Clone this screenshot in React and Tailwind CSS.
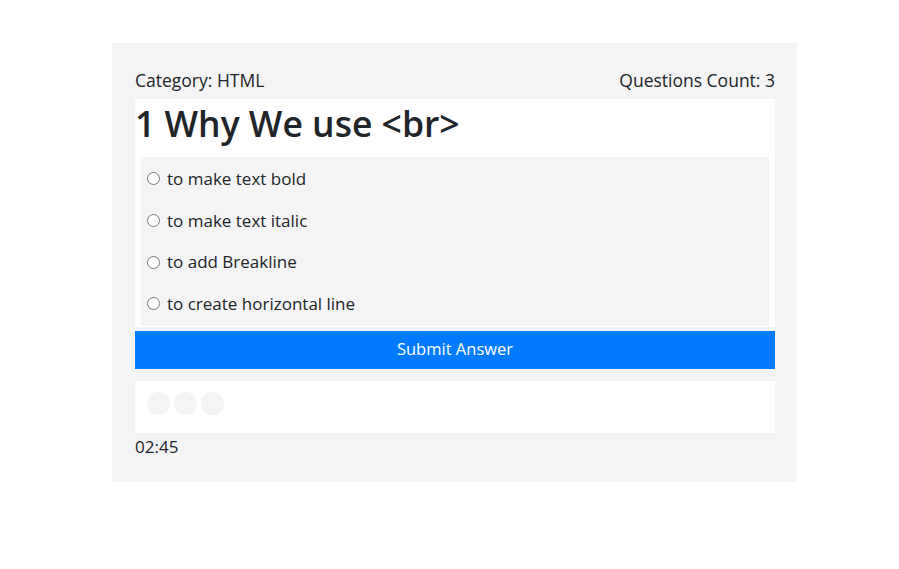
import { useState } from "react";

const options = [
  "to make text bold",
  "to make text italic",
  "to add Breakline",
  "to create horizontal line",
];

export default function App() {
  const [picked, setPicked] = useState(null);

  return (
    <div className="w-[899px] h-[569px] bg-white pt-[43px] font-['Open_Sans',sans-serif] text-[#212529]">
      <div className="ml-[112px] w-[685px] h-[439px] bg-[#f4f4f4] pl-[23px] pr-[22px] pt-[25px]">
        {/* Header */}
        <div className="flex justify-between text-[17.5px] leading-[24px]">
          <span>Category: HTML</span>
          <span>Questions Count: 3</span>
        </div>

        {/* Question */}
        <div className="bg-white mt-[7px] px-[6px] pb-[1px]">
          <h1 className="text-[35.5px] font-semibold leading-[48px] -ml-[6px] pb-[10px]">
            1 Why We use &lt;br&gt;
          </h1>
          <div className="bg-[#f4f4f4] py-[1px]">
            {options.map((o, i) => (
              <label
                key={i}
                className="flex items-center gap-[7px] h-[41.7px] pl-[6px] text-[17px] cursor-pointer"
              >
                <input
                  type="radio"
                  name="answer"
                  checked={picked === i}
                  onChange={() => setPicked(i)}
                  className="w-[13px] h-[13px] m-0"
                />
                {o}
              </label>
            ))}
          </div>
        </div>

        <button className="w-full h-[38px] mt-[4px] bg-[#007bff] text-white text-[16.5px]">
          Submit Answer
        </button>

        {/* Progress */}
        <div className="bg-white mt-[12px] h-[52px] flex items-start gap-[4px] pt-[11px] px-[12px]">
          <span className="w-[23px] h-[23px] rounded-full bg-[#f4f4f4]" />
          <span className="w-[23px] h-[23px] rounded-full bg-[#f4f4f4]" />
          <span className="w-[23px] h-[23px] rounded-full bg-[#f4f4f4]" />
        </div>

        <div className="mt-[2px] text-[17px] leading-[24px]">02:45</div>
      </div>
    </div>
  );
}
